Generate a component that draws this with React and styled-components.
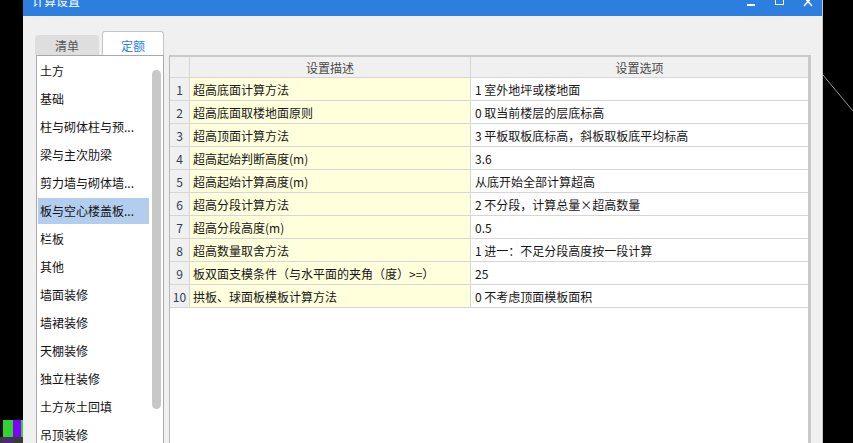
import React from "react";
import styled, { createGlobalStyle } from "styled-components";

const Global = createGlobalStyle`
  html, body { margin: 0; padding: 0; background: #000; }
  body { font-family: "Noto Sans CJK SC", "Noto Sans", sans-serif; }
  * { box-sizing: border-box; }
`;

const Screen = styled.div`
  width: 853px;
  height: 443px;
  display: flex;
  background: #000;
  overflow: hidden;
`;

const LeftDesk = styled.div`
  width: 23px;
  display: flex;
  flex-direction: column;
  justify-content: flex-end;
`;

const PixelRow = styled.div`
  display: flex;
  height: ${(p) => p.h}px;
`;

const Pixel = styled.div`
  width: ${(p) => p.w}px;
  background: ${(p) => p.c};
`;

const RightDesk = styled.div`
  width: 30px;
  display: flex;
`;

const Window = styled.div`
  width: 800px;
  display: flex;
  flex-direction: column;
  background: #f0f0f0;
  border-right: 1px solid #c6c9ce;
`;

const TitleBar = styled.div`
  height: 16px;
  flex: none;
  background: #2d7fdf;
  display: flex;
  align-items: flex-start;
  overflow: hidden;
  padding: 0 0 0 9px;
`;

const Title = styled.span`
  color: #fff;
  font-size: 12px;
  line-height: 16px;
  margin-top: -7px;
  flex: 1;
`;

const Controls = styled.div`
  display: flex;
  align-items: flex-start;
  margin-top: -6px;
`;

const CtrlIcon = styled.svg`
  display: block;
  margin-left: ${(p) => p.ml || 0}px;
`;

const Body = styled.div`
  flex: 1;
  min-height: 0;
  display: grid;
  grid-template-columns: 128px 642px;
  grid-template-rows: 24px 1fr;
  column-gap: 5px;
  padding: 15px 0 0 13px;
  overflow: hidden;
`;

const TabRow = styled.div`
  grid-column: 1;
  grid-row: 1;
  display: flex;
  align-items: flex-end;
  gap: 3px;
  margin-left: -1px;
`;

const Tab = styled.div`
  width: ${(p) => (p.active ? 62 : 64)}px;
  height: ${(p) => (p.active ? 24 : 20)}px;
  display: flex;
  align-items: center;
  justify-content: center;
  font-size: 12px;
  padding-top: ${(p) => (p.active ? 4 : 0)}px;
  color: ${(p) => (p.active ? "#2f82e0" : "#555")};
  background: ${(p) => (p.active ? "#fff" : "#dedede")};
  border: 1px solid ${(p) => (p.active ? "#c4c4c4" : "#dedede")};
  border-bottom: none;
  border-radius: 3px 3px 0 0;
`;

const ListPanel = styled.div`
  grid-column: 1;
  grid-row: 2;
  background: #fff;
  border: 1px solid #a8a8a8;
  border-bottom: none;
  display: flex;
  padding: 2px 0 0 1px;
  min-height: 0;
  overflow: hidden;
`;

const ItemColumn = styled.ul`
  width: 111px;
  margin: 0;
  padding: 0;
  list-style: none;
`;

const Item = styled.li`
  height: 26px;
  margin-bottom: 2px;
  line-height: 26px;
  padding-left: 2px;
  font-size: 12px;
  color: #111;
  white-space: nowrap;
  overflow: hidden;
  background: ${(p) => (p.selected ? "#b3cdee" : "transparent")};
`;

const ScrollTrack = styled.div`
  flex: 1;
  padding: 12px 0 0 3px;
`;

const ScrollThumb = styled.div`
  width: 9px;
  height: 339px;
  border-radius: 5px;
  background: #c8c8c8;
`;

const TablePanel = styled.div`
  grid-column: 2;
  grid-row: 2;
  background: #fff;
  border-top: 2px solid #c9c9c9;
  border-right: 3px solid #c9c9c9;
  border-left: 1px solid #b6b6b6;
  min-height: 0;
  overflow: hidden;
`;

const Row = styled.div`
  display: grid;
  grid-template-columns: 20px 281px 1fr;
  height: ${(p) => (p.header ? 21 : 23)}px;
  border-bottom: 1px solid #d6d6d6;
`;

const Cell = styled.div`
  display: flex;
  align-items: center;
  font-size: 12px;
  white-space: nowrap;
  overflow: hidden;
  border-right: ${(p) => (p.last ? "none" : "1px solid #d6d6d6")};
  justify-content: ${(p) => (p.center ? "center" : "flex-start")};
  padding-left: ${(p) => p.pl || 0}px;
  background: ${(p) => p.bg};
  color: ${(p) => p.color || "#161616"};
`;

const items = [
  "土方",
  "基础",
  "柱与砌体柱与预...",
  "梁与主次肋梁",
  "剪力墙与砌体墙...",
  "板与空心楼盖板...",
  "栏板",
  "其他",
  "墙面装修",
  "墙裙装修",
  "天棚装修",
  "独立柱装修",
  "土方灰土回填",
  "吊顶装修",
];

const rows = [
  ["超高底面计算方法", "1 室外地坪或楼地面"],
  ["超高底面取楼地面原则", "0 取当前楼层的层底标高"],
  ["超高顶面计算方法", "3 平板取板底标高，斜板取板底平均标高"],
  ["超高起始判断高度(m)", "3.6"],
  ["超高起始计算高度(m)", "从底开始全部计算超高"],
  ["超高分段计算方法", "2 不分段，计算总量×超高数量"],
  ["超高分段高度(m)", "0.5"],
  ["超高数量取舍方法", "1 进一：不足分段高度按一段计算"],
  ["板双面支模条件（与水平面的夹角（度）>=）", "25"],
  ["拱板、球面板模板计算方法", "0 不考虑顶面模板面积"],
];

export default function App() {
  return (
    <>
      <Global />
      <Screen>
        <LeftDesk>
          <PixelRow h={17}>
            <Pixel w={3} c="#1a0a22" />
            <Pixel w={10} c="#2fd42f" />
            <Pixel w={8} c="#8000ff" />
            <Pixel w={2} c="#2fd42f" />
          </PixelRow>
          <PixelRow h={6}>
            <Pixel w={3} c="#3a3a3a" />
            <Pixel w={10} c="#4b2a78" />
            <Pixel w={10} c="#3a3a3a" />
          </PixelRow>
        </LeftDesk>
        <Window>
          <TitleBar>
            <Title>计算设置</Title>
            <Controls>
              <CtrlIcon width="10" height="14" viewBox="0 0 10 14">
                <rect x="1" y="10" width="8" height="2" fill="#fff" />
              </CtrlIcon>
              <CtrlIcon ml={18} width="10" height="14" viewBox="0 0 10 14">
                <rect x="1.5" y="3.5" width="8" height="7" fill="none" stroke="#fff" strokeWidth="1" />
                <rect x="1.5" y="3" width="8" height="2" fill="#fff" />
              </CtrlIcon>
              <CtrlIcon ml={18} width="12" height="14" viewBox="0 0 12 14">
                <path d="M2 3 L10 12 M10 3 L2 12" stroke="#fff" strokeWidth="1.6" />
              </CtrlIcon>
              <CtrlIcon ml={7} width="1" height="14" viewBox="0 0 1 14" />
            </Controls>
          </TitleBar>
          <Body>
            <TabRow>
              <Tab>清单</Tab>
              <Tab active>定额</Tab>
            </TabRow>
            <ListPanel>
              <ItemColumn>
                {items.map((t, i) => (
                  <Item key={t} selected={i === 5}>
                    {t}
                  </Item>
                ))}
              </ItemColumn>
              <ScrollTrack>
                <ScrollThumb />
              </ScrollTrack>
            </ListPanel>
            <TablePanel>
              <Row header>
                <Cell bg="#f0f0f0" />
                <Cell bg="#f0f0f0" center color="#4a4a4a">
                  设置描述
                </Cell>
                <Cell bg="#f0f0f0" center last color="#4a4a4a">
                  设置选项
                </Cell>
              </Row>
              {rows.map(([d, o], i) => (
                <Row key={i}>
                  <Cell bg="#f0f0f0" center color="#2f3d4f">
                    {i + 1}
                  </Cell>
                  <Cell bg="#ffffdc" pl={3}>
                    {d}
                  </Cell>
                  <Cell bg="#fff" pl={4} last>
                    {o}
                  </Cell>
                </Row>
              ))}
            </TablePanel>
          </Body>
        </Window>
        <RightDesk>
          <svg width="30" height="443" viewBox="0 0 30 443">
            <line x1="0" y1="75" x2="30" y2="111" stroke="#9a9a9a" strokeWidth="1" />
          </svg>
        </RightDesk>
      </Screen>
    </>
  );
}
